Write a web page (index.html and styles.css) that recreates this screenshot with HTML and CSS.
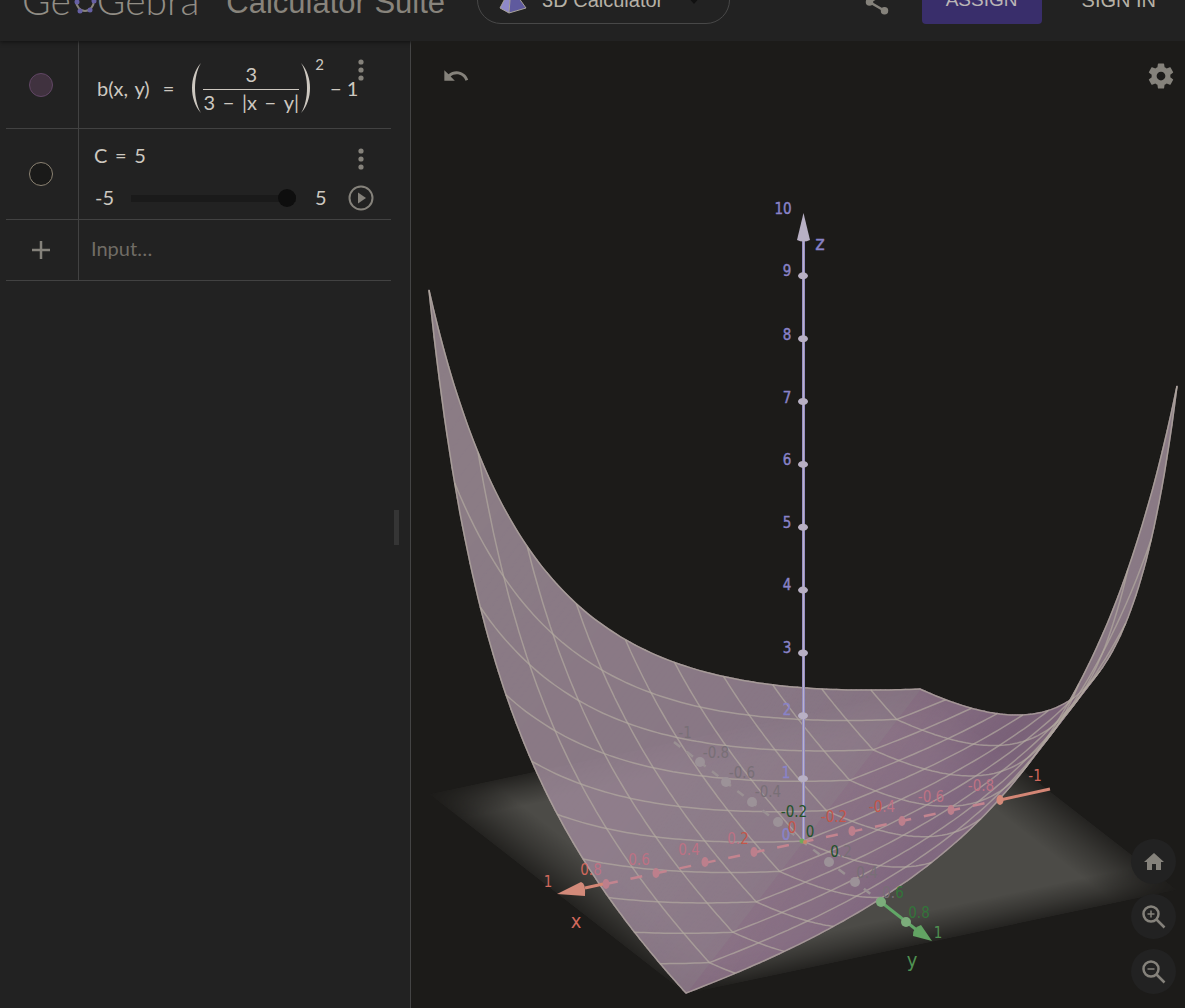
FILE: index.html
```html
<!DOCTYPE html>
<html lang="en">
<head>
<meta charset="utf-8">
<meta name="viewport" content="width=device-width, initial-scale=1">
<title>3D Calculator</title>
<link rel="stylesheet" href="styles.css">
</head>
<body>
<div class="app">
  <header class="header">
    <a class="logo" href="#" aria-label="GeoGebra">
      <span>Ge</span>
      <svg class="logo-o" viewBox="0 0 26 30" aria-hidden="true">
        <ellipse cx="14" cy="15" rx="9" ry="11"/>
        <circle cx="6" cy="17" r="2.500"/><circle cx="23" cy="16" r="2.500"/><circle cx="9" cy="26" r="2.500"/><circle cx="19" cy="25" r="2.500"/><circle cx="14" cy="4" r="2.500"/>
      </svg>
      <span>Gebra</span>
    </a>
    <span class="suite">Calculator Suite</span>
    <button class="picker" type="button">
      <svg width="28" height="28" viewBox="0 0 28 28" aria-hidden="true">
        <path d="M12 1 1 22l9 5z" fill="#8f89c9"/><path d="M12 1l-2 26 17-5z" fill="#5f5a9e"/><path d="M12 1 1 22l9 5 17-5zM12 1l-2 26" fill="none" stroke="#a8a29a"/>
      </svg>
      <span>3D Calculator</span>
      <svg class="caret" width="14" height="8" viewBox="0 0 14 8" aria-hidden="true"><path d="M0 0h14L7 8z"/></svg>
    </button>
    <button class="icon-button share" type="button" aria-label="Share">
      <svg width="30" height="30" viewBox="0 0 24 24"><path d="M18 5 6 12l12 7" fill="none" stroke="currentColor" stroke-width="2"/><circle cx="18" cy="5" r="3"/><circle cx="6" cy="12" r="3"/><circle cx="18" cy="19" r="3"/></svg>
    </button>
    <button class="assign" type="button">ASSIGN</button>
    <button class="signin" type="button">SIGN IN</button>
  </header>

  <main class="workspace">
    <section class="algebra" aria-label="Algebra view">
      <div class="rows">
        <div class="row row-function">
          <div class="marble-cell"><button class="marble marble-on" type="button" aria-label="Hide b"></button></div>
          <div class="cell">
            <div class="formula">
              <span>b(x,&nbsp;&#8202;y)</span><span class="equals">=</span>
              <svg class="paren" width="12" height="52" viewBox="0 0 12 52" aria-label="("><path d="M11 1C-1 14-1 38 11 51 3 38 3 14 11 1z"/></svg>
              <span class="fraction"><span class="numerator">3</span><span class="denominator">3&#8201; − &#8201;|x&#8201; − &#8201;y|</span></span>
              <svg class="paren" width="12" height="52" viewBox="0 0 12 52" aria-label=")"><path d="M1 1C13 14 13 38 1 51 9 38 9 14 1 1z"/></svg>
              <sup>2</sup><span class="tail">− 1</span>
            </div>
            <button class="icon-button more" type="button" aria-label="More options for b"><svg width="6" height="22" viewBox="0 0 6 22"><circle cx="3" cy="3" r="2.600"/><circle cx="3" cy="11" r="2.600"/><circle cx="3" cy="19" r="2.600"/></svg></button>
          </div>
        </div>
        <div class="row row-slider">
          <div class="marble-cell"><button class="marble" type="button" aria-label="Show C"></button></div>
          <div class="cell slider-cell">
            <div class="line definition"><label for="c-slider">C&#8201; = &#8201;5</label>
              <button class="icon-button dots" type="button" aria-label="More options for C"><svg width="6" height="22" viewBox="0 0 6 22"><circle cx="3" cy="3" r="2.600"/><circle cx="3" cy="11" r="2.600"/><circle cx="3" cy="19" r="2.600"/></svg></button>
            </div>
            <div class="line slider-line">
              <span class="min">-5</span>
              <input id="c-slider" type="range" min="-5" max="5" step="0.1" value="5">
              <span class="max">5</span>
              <button class="icon-button play" type="button" aria-label="Play"><svg width="26" height="26" viewBox="0 0 26 26"><circle cx="13" cy="13" r="11.500" fill="none" stroke="currentColor" stroke-width="2"/><path d="M10 7.500v11l8-5.500z"/></svg></button>
            </div>
          </div>
        </div>
        <div class="row row-input">
          <div class="marble-cell"><button class="icon-button" type="button" aria-label="Add"><svg width="18" height="18" viewBox="0 0 18 18"><path d="M9 0v18M0 9h18" stroke="currentColor" stroke-width="2.500"/></svg></button></div>
          <div class="cell"><input class="entry" type="text" placeholder="Input…" aria-label="Input"></div>
        </div>
      </div>
      <div class="splitter"></div>
    </section>

    <section class="graphics" aria-label="3D view">
      <svg class="scene" viewBox="411 41 774 967" preserveAspectRatio="xMidYMid slice">
        <defs>
          <linearGradient id="fade-x"><stop offset="0" stop-color="#2c2c2c"/><stop offset=".06" stop-color="#999"/><stop offset=".125" stop-color="#fff"/><stop offset=".875" stop-color="#fff"/><stop offset=".94" stop-color="#999"/><stop offset="1" stop-color="#2c2c2c"/></linearGradient>
          <linearGradient id="fade-y" x2="0" y2="1"><stop offset="0" stop-color="#2c2c2c"/><stop offset=".06" stop-color="#999"/><stop offset=".125" stop-color="#fff"/><stop offset=".875" stop-color="#fff"/><stop offset=".94" stop-color="#999"/><stop offset="1" stop-color="#2c2c2c"/></linearGradient>
          <mask id="mask-x" maskContentUnits="objectBoundingBox"><rect width="1" height="1" fill="url(#fade-x)"/></mask>
          <mask id="mask-y" maskContentUnits="objectBoundingBox"><rect width="1" height="1" fill="url(#fade-y)"/></mask>
        </defs>
        <g transform="matrix(-245.5 52 128.5 100 803 842)"><g mask="url(#mask-y)"><rect x="-1" y="-1" width="2" height="2" fill="#4c4b47" mask="url(#mask-x)"/></g></g>
        <g id="surface" class="surface"></g>
        <g id="mesh" class="mesh"></g>
        <g class="y-axis">
          <path class="hidden-line" d="M674 742 881 902"/>
          <g class="hidden-dot"><circle cx="700" cy="762" r="5"/><circle cx="726" cy="782" r="5"/><circle cx="752" cy="802" r="5"/><circle cx="778" cy="822" r="5"/><circle cx="829" cy="862" r="5"/><circle cx="855" cy="882" r="5"/></g>
          <path class="solid-line" d="M881 902 918 931"/><path class="cone" d="M932 941 913 936Q912 928 921 925z"/>
          <circle class="dot" cx="881" cy="902" r="5"/><circle class="dot" cx="906" cy="922" r="5"/>
        </g>
        <g class="x-axis">
          <path class="hidden-line" d="M606 884 1000 800"/>
          <g class="hidden-dot"><ellipse cx="606" cy="884" rx="3.500" ry="5"/><ellipse cx="656" cy="873" rx="3.500" ry="5"/><ellipse cx="705" cy="862" rx="3.500" ry="5"/><ellipse cx="754" cy="852" rx="3.500" ry="5"/><ellipse cx="852" cy="831" rx="3.500" ry="5"/><ellipse cx="902" cy="821" rx="3.500" ry="5"/><ellipse cx="951" cy="810" rx="3.500" ry="5"/></g>
          <path class="solid-line" d="M585 888 603 884M1000 800 1050 789"/><path class="cone" d="M557 894 581 882Q586 883 585 896z"/>
          <ellipse class="dot" cx="1000" cy="800" rx="3.500" ry="5"/>
        </g>
        <g class="z-axis">
          <path class="rim" d="M803.500 842V238"/><path class="core" d="M803.500 840V238"/><path class="cone" d="M803.500 213 797 240Q803.500 243 810 240z"/>
          <g id="z-ticks"></g>
        </g>
        <circle cx="802" cy="841" r="2.500" fill="#72a85c"/><circle cx="805" cy="842" r="2" fill="#cb8468"/>
        <g class="labels z-labels">
          <text x="783" y="214">10</text><text x="787" y="276">9</text><text x="787" y="340">8</text><text x="787" y="403">7</text><text x="787" y="465">6</text><text x="787" y="528">5</text><text x="787" y="590">4</text><text x="787" y="653">3</text><text x="787" y="715">2</text><text x="786" y="778">1</text><text x="786" y="840">0</text><text class="name" x="820" y="250">z</text>
        </g>
        <g class="labels x-labels">
          <text x="548" y="887">1</text><text x="591" y="875">0.<tspan class="behind">8</tspan></text><text class="behind" x="639" y="865">0.6</text><text class="behind" x="689" y="855">0.4</text><text class="behind" x="738" y="844">0.<tspan class="front">2</tspan></text><text class="front" x="792" y="833">0</text><text class="front" x="834" y="822">-0.2</text><text class="behind" x="882" y="812"><tspan class="front">-0</tspan>.4</text><text class="behind" x="931" y="802">-0.6</text><text class="behind" x="981" y="791">-0.8</text><text x="1035" y="781">-1</text><text class="name" x="576" y="928">x</text>
        </g>
        <g class="labels y-labels">
          <text class="behind" x="685" y="738">-1</text><text class="behind" x="716" y="758">-0.8</text><text class="behind" x="742" y="778">-0.6</text><text class="behind" x="768" y="797">-0.4</text><text class="dark" x="794" y="817">-0.2</text><text class="dark" x="810" y="837">0</text><text class="behind" x="841" y="857"><tspan class="dark">0</tspan>.2</text><text class="behind" x="867" y="878">0.4</text><text class="outer" x="893" y="898"><tspan class="behind">0.</tspan>6</text><text class="outer" x="919" y="918">0.8</text><text x="938" y="938">1</text><text class="name" x="912" y="967">y</text>
        </g>
      </svg>
      <div class="top-tools">
        <button class="icon-button" type="button" aria-label="Undo"><svg width="28" height="28" viewBox="0 0 24 24"><path d="M12.500 8c-2.650 0-5.050.990-6.900 2.600L2 7v9h9l-3.620-3.620c1.390-1.160 3.160-1.880 5.120-1.880 3.540 0 6.550 2.310 7.600 5.500l2.370-.780C21.080 11.030 17.150 8 12.500 8z"/></svg></button>
        <button class="icon-button" type="button" aria-label="Settings"><svg width="30" height="30" viewBox="0 0 24 24"><path d="M19.430 12.980c.040-.320.070-.640.070-.980s-.030-.660-.070-.980l2.110-1.650c.190-.150.240-.420.120-.640l-2-3.460c-.120-.220-.390-.300-.610-.220l-2.490 1c-.520-.400-1.080-.730-1.690-.980l-.380-2.650A.488.488 0 0 0 14 2h-4c-.250 0-.460.180-.490.420l-.380 2.650c-.610.250-1.170.590-1.690.980l-2.490-1c-.230-.090-.490 0-.610.220l-2 3.460c-.130.220-.070.490.120.640l2.110 1.650c-.040.320-.070.650-.070.980s.030.660.070.980l-2.110 1.650c-.190.150-.240.420-.120.640l2 3.460c.120.220.390.300.610.220l2.490-1c.520.400 1.080.730 1.690.980l.380 2.650c.030.240.240.420.490.420h4c.250 0 .460-.180.490-.420l.380-2.650c.610-.250 1.170-.590 1.690-.980l2.490 1c.230.090.490 0 .610-.220l2-3.460c.120-.220.070-.490-.120-.640l-2.110-1.650zM12 15.500c-1.930 0-3.500-1.570-3.500-3.500s1.570-3.500 3.500-3.500 3.500 1.570 3.500 3.500-1.570 3.500-3.500 3.500z"/></svg></button>
      </div>
      <div class="zoom-tools">
        <button class="round" type="button" aria-label="Standard view"><svg width="24" height="24" viewBox="0 0 24 24"><path d="M10 20v-6h4v6h5v-8h3L12 3 2 12h3v8z"/></svg></button>
        <button class="round" type="button" aria-label="Zoom in"><svg class="outline" width="26" height="26" viewBox="0 0 26 26"><circle cx="10" cy="10" r="7.500"/><path d="m15.500 15.500 8 8"/><path class="thin" d="M6.500 10h7M10 6.500v7"/></svg></button>
        <button class="round" type="button" aria-label="Zoom out"><svg class="outline" width="26" height="26" viewBox="0 0 26 26"><circle cx="10" cy="10" r="7.500"/><path d="m15.500 15.500 8 8"/><path class="thin" d="M6.500 10h7"/></svg></button>
      </div>
    </section>
  </main>
</div>
<script src="scene.js"></script>
</body>
</html>
```
FILE: styles.css
```css
* { box-sizing: border-box; }
body { margin: 0; background: #1c1b19; color: #cdc8c0; font-family: "Liberation Sans", sans-serif; }
button { border: 0; padding: 0; margin: 0; background: none; color: inherit; font: inherit; }
svg { display: block; flex: none; }

.app { display: flex; flex-direction: column; height: 100vh; overflow: hidden; }

.header { display: flex; flex: none; align-items: center; height: 82px; margin-top: -41px; padding: 0 29px 0 22px; background: #222; box-shadow: 0 1px 4px #111; position: relative; }
.logo { display: flex; align-items: center; color: #928e86; font: 300 39px/48px Lato, sans-serif; text-decoration: none; }
.logo-o { width: 26px; height: 30px; fill: #6660a4; }
.logo-o ellipse { fill: none; stroke: #88847c; stroke-width: 2; }
.suite { margin-left: 27px; padding-top: 6px; color: #88847c; font-size: 31px; white-space: nowrap; }
.picker { display: flex; align-items: center; width: 253px; height: 48px; margin-left: 32px; padding: 0 28px 0 21px; border: 1px solid #484848; border-radius: 24px; color: #b6b1a6; font-size: 20px; white-space: nowrap; }
.picker span { margin-left: 15px; }
.caret { margin-left: auto; fill: #111; }
.icon-button { color: #85827b; }
.icon-button svg, .round svg { fill: currentColor; }
.share { margin-left: auto; padding-top: 3px; }
.assign { width: 120px; height: 48px; margin-left: 30px; border-radius: 4px; background: #392e6b; color: #bbb6b6; font-size: 19px; }
.signin { margin-left: 40px; color: #b6b1a6; font-size: 20px; white-space: nowrap; }

.workspace { display: flex; flex: 1; min-height: 0; }
.algebra { display: flex; flex: none; width: 411px; padding-left: 6px; border-right: 1px solid #444; background: #222; font-family: Lato, sans-serif; font-size: 20px; }
.rows { flex: 1; }
.row { display: flex; border-bottom: 1px solid #424242; }
.row-function { height: 88px; }
.row-slider { height: 91px; }
.row-input { height: 61px; }
.marble-cell { display: flex; flex: none; align-items: center; justify-content: center; width: 73px; padding-right: 3px; border-right: 1px solid #424242; }
.marble { width: 24px; height: 24px; border: 1px solid #8c8373; border-radius: 50%; background: #1a1a19; }
.marble-on { border-color: #614665; background: #40323f; }
.cell { display: flex; flex: 1; min-width: 0; position: relative; }
.formula { display: flex; align-items: center; height: 94px; padding-left: 18px; line-height: 24px; white-space: nowrap; }
.equals { margin: 0 16px 0 13px; }
.paren { fill: currentColor; }
.fraction { display: flex; flex-direction: column; width: 96px; margin: 0 1px; text-align: center; }
.numerator { padding-bottom: 3px; border-bottom: 1px solid currentColor; }
.formula sup { align-self: flex-start; margin-top: 11px; margin-left: 3px; font-size: 15px; line-height: 24px; }
.tail { margin-left: 6px; }
.more { position: absolute; top: 18px; right: 27px; }
.slider-cell { flex-direction: column; padding: 12px 16px 0 15px; }
.line { display: flex; align-items: center; }
.definition { height: 36px; justify-content: space-between; line-height: 28px; }
.definition label { padding-bottom: 8px; }
.dots { margin-right: 11px; }
.slider-line { height: 42px; }
.min, .max { padding-bottom: 2px; }
.min { width: 37px; padding-left: 1px; }
.slider-line input { appearance: none; width: 165px; height: 20px; margin: 0; background: none; }
.slider-line input::-webkit-slider-runnable-track { height: 7px; background: #1a1a1a; }
.slider-line input::-webkit-slider-thumb { appearance: none; width: 18px; height: 18px; margin-top: -6px; border-radius: 50%; background: #0e0e0e; }
.max { margin-left: 19px; }
.play { margin-left: auto; margin-right: 1px; }
.entry { width: 100%; padding: 0 12px 4px; border: 0; outline: 0; background: none; color: #cdc8c0; font: 20px Lato, sans-serif; }
.entry::placeholder { color: #706c65; opacity: 1; }
.splitter { align-self: center; width: 5px; height: 35px; margin: 6px 11px 0 3px; background: #353535; }

.graphics { position: relative; flex: 1; min-width: 0; background: #1c1b19; }
.scene { position: absolute; inset: 0; width: 100%; height: 100%; }
.top-tools { position: absolute; top: 20px; left: 31px; right: 9px; display: flex; align-items: center; justify-content: space-between; }
.zoom-tools { position: absolute; right: 9px; bottom: 14px; display: flex; flex-direction: column; gap: 10px; }
.round { display: flex; align-items: center; justify-content: center; width: 45px; height: 45px; border-radius: 50%; background: #222; color: #85827b; }
.round .outline { fill: none; stroke: currentColor; stroke-width: 2.5; }
.outline .thin { stroke-width: 1.5; }

.surface { opacity: .88; stroke-linejoin: round; }
.mesh { fill: none; stroke: #b2aaa0; stroke-width: 1.5; stroke-opacity: .7; }
.hidden-line { fill: none; stroke-width: 2; }
.solid-line { fill: none; stroke-width: 3; }
.x-axis .hidden-line { stroke: #c3848f; stroke-width: 2.5; stroke-dasharray: 12 13; }
.x-axis .hidden-dot { fill: #bd7f8c; }
.x-axis .solid-line { stroke: #d38675; }
.x-axis .cone, .x-axis .dot { fill: #d38a7a; }
.y-axis .hidden-line { stroke: #9a9093; stroke-width: 2.5; stroke-dasharray: 8 8; }
.y-axis .hidden-dot { fill: #9c9298; }
.y-axis .solid-line { stroke: #62a767; }
.y-axis .cone { fill: #62a363; }
.y-axis .dot { fill: #7cac7b; }
.z-axis .rim { stroke: #8882c2; stroke-width: 3; }
.z-axis .core { stroke: #bbb2c8; stroke-width: 1.5; }
.z-axis { fill: #b8b0c4; }
.labels { font: 15px "DejaVu Sans Condensed", "DejaVu Sans", sans-serif; text-anchor: middle; }
.labels .name { font-size: 20px; }
.z-labels { fill: #8983c8; stroke: #8983c8; stroke-width: .4; }
.x-labels { fill: #d0685c; }
.x-labels .front { fill: #c4564a; }
.x-labels .behind { fill: #bd7284; }
.y-labels { fill: #4f9152; }
.y-labels .behind { fill: #786f76; }
.y-labels .dark { fill: #22522a; }
.y-labels .outer { fill: #33743a; }
```
FILE: scene.js
```js
const SVG = "http://www.w3.org/2000/svg";
const b = (x, y) => (3 / (3 - Math.abs(x - y))) ** 2 - 1;

function project(x, y, z = b(x, y)) {
  return [803 - 245.5 * x + 128.5 * y, 841 + 52 * x + 100 * y - 62.85 * z];
}

function add(parent, name, attributes) {
  const node = document.createElementNS(SVG, name);
  for (const key in attributes) node.setAttribute(key, attributes[key]);
  parent.append(node);
}

function points(list) {
  return list.map(p => p.map(v => v.toFixed(1)).join(" ")).join(" ");
}

// Shade depends on u = x - y only, because the surface does too.
const shades = [
  [-2, 155, 138, 150], [-1.5, 150, 130, 145], [-1.1, 138, 111, 136],
  [-0.8, 136, 108, 135], [-0.4, 143, 116, 140], [0, 147, 120, 142],
  [0.001, 148, 127, 144], [0.4, 150, 131, 147], [0.8, 153, 133, 149], [2, 155, 139, 149]
];

function shade(u) {
  let i = 1;
  while (i < shades.length - 1 && shades[i][0] < u) i++;
  const [p, q] = [shades[i - 1], shades[i]];
  const t = (u - p[0]) / (q[0] - p[0]);
  return "rgb(" + [1, 2, 3].map(k => Math.round(p[k] + t * (q[k] - p[k]))).join() + ")";
}

// The two ends, on the edges of the square, of the line x - y = u.
function ends(u) {
  return u > 0
    ? [project(u - 1, -1), project(1, 1 - u)]
    : [project(-1, -1 - u), project(1 + u, 1)];
}

const surface = document.getElementById("surface");
for (let i = -100; i < 100; i++) {
  const u = i / 50, v = (i + 1) / 50;
  const [p, q] = ends(u), [r, s] = ends(v);
  const fill = shade((u + v) / 2);
  add(surface, "polygon", { points: points([p, q, s, r]), fill, stroke: fill, "stroke-width": 1.5 });
}

const mesh = document.getElementById("mesh");
for (let k = -5; k <= 5; k++) {
  const c = k / 5, alongX = [], alongY = [];
  for (let i = -50; i <= 50; i++) {
    alongX.push(project(i / 50, c));
    alongY.push(project(c, i / 50));
  }
  add(mesh, "polyline", { points: points(alongX) });
  add(mesh, "polyline", { points: points(alongY) });
}

const ticks = document.getElementById("z-ticks");
for (let z = 1; z < 10; z++) {
  const [cx, cy] = project(0, 0, z);
  add(ticks, "ellipse", { cx, cy: cy + 0.5, rx: 5, ry: 3.5 });
}
```
